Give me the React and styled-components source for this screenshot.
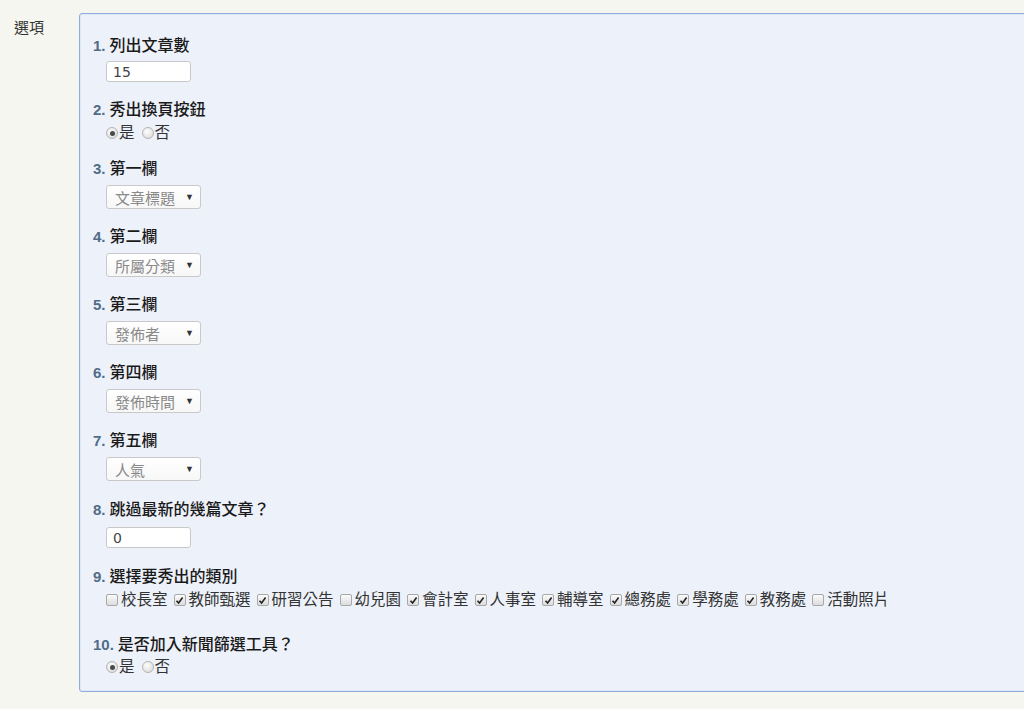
import React from "react";
import styled, { createGlobalStyle } from "styled-components";

const GlobalStyle = createGlobalStyle`
  html, body {
    margin: 0;
    padding: 0;
    background: #f6f6f1;
    overflow: hidden;
  }
  body {
    font-family: "Liberation Sans", "Noto Sans CJK TC", sans-serif;
    color: #222;
  }
`;

const cjk = `"Liberation Sans", "Noto Sans CJK TC", sans-serif`;

const Page = styled.div`
  display: flex;
  align-items: flex-start;
  padding-top: 13px;
  height: 709px;
  box-sizing: border-box;
  overflow: hidden;
`;

const FieldName = styled.div`
  width: 65px;
  flex: none;
  padding: 6px 0 0 14px;
  font-family: ${cjk};
  font-size: 15px;
  line-height: 17px;
  color: #333;
`;

const Panel = styled.div`
  flex: 1;
  margin-right: -20px;
  background: #edf1f9;
  border: 1px solid #8eaed8;
  border-radius: 3px;
  box-shadow: 0 0 0 1px #dde7f5 inset;
  padding: 22px 0 14px 13px;
  display: flex;
  flex-direction: column;
`;

const Item = styled.div`
  display: flex;
  flex-direction: column;
  align-items: flex-start;
  margin-bottom: ${(p) => p.$after ?? 18}px;
  &:last-child {
    margin-bottom: 0;
  }
`;

const Label = styled.div`
  font-family: ${cjk};
  font-size: 16px;
  line-height: 20px;
  font-weight: 500;
  color: #1a1a1a;
  white-space: nowrap;
`;

const Num = styled.span`
  color: #506c88;
  font-family: "Liberation Sans", Arial, sans-serif;
  font-weight: 700;
  font-size: 15px;
  margin-right: 4px;
`;

const Control = styled.div`
  margin-top: ${(p) => p.$top}px;
  margin-left: 13px;
  display: flex;
  align-items: center;
  flex-wrap: nowrap;
`;

const TextBox = styled.input`
  width: 85px;
  height: 21px;
  box-sizing: border-box;
  border: 1px solid #c9c9c9;
  border-radius: 3px;
  background: #fff;
  padding: 0 6px;
  font-family: "DejaVu Sans", Verdana, sans-serif;
  font-size: 14px;
  color: #444;
  outline: none;
`;

const SelectBox = styled.div`
  width: 95px;
  height: 24px;
  box-sizing: border-box;
  border: 1px solid #c9c9c9;
  border-radius: 3px;
  background: linear-gradient(#ffffff, #f7f7f7);
  display: flex;
  align-items: center;
  justify-content: space-between;
  padding: 0 6px 0 8px;
  font-family: ${cjk};
  font-size: 15px;
  color: #8a8a8a;
`;

const Arrow = styled.span`
  font-size: 9px;
  color: #333;
`;

const Choice = styled.label`
  display: inline-flex;
  align-items: center;
  font-family: ${cjk};
  font-size: 15.5px;
  line-height: 20px;
  color: #333;
  margin-right: ${(p) => p.$gap ?? 6}px;
  white-space: nowrap;
`;

const RadioDot = styled.span`
  width: 12px;
  height: 12px;
  box-sizing: border-box;
  border-radius: 50%;
  border: 1px solid #b4b4b4;
  background: radial-gradient(circle at 40% 35%, #fdfdfd, #d6d6d6);
  display: inline-flex;
  align-items: center;
  justify-content: center;
  margin-right: 1px;
  &::after {
    content: "";
    width: 5px;
    height: 5px;
    border-radius: 50%;
    background: ${(p) => (p.$on ? "#4a4a4a" : "transparent")};
  }
`;

const CheckBox = styled.span`
  width: 12px;
  height: 12px;
  box-sizing: border-box;
  border: 1px solid #a8a8a8;
  border-radius: 2px;
  background: linear-gradient(#fbfbfb, #dcdcdc);
  display: inline-flex;
  align-items: center;
  justify-content: center;
  margin-right: 3px;
  svg {
    display: block;
  }
`;

function Radio({ on, children, gap }) {
  return (
    <Choice $gap={gap}>
      <RadioDot $on={on} />
      {children}
    </Choice>
  );
}

function Check({ on, children }) {
  return (
    <Choice $gap={6}>
      <CheckBox>
        {on && (
          <svg width="9" height="9" viewBox="0 0 9 9">
            <path d="M1.5 4.8 L3.6 7 L7.6 1.6" fill="none" stroke="#222" strokeWidth="1.6" />
          </svg>
        )}
      </CheckBox>
      {children}
    </Choice>
  );
}

function Select({ value }) {
  return (
    <SelectBox>
      <span>{value}</span>
      <Arrow>▼</Arrow>
    </SelectBox>
  );
}

const columns = [
  ["3", "第一欄", "文章標題"],
  ["4", "第二欄", "所屬分類"],
  ["5", "第三欄", "發佈者"],
  ["6", "第四欄", "發佈時間"],
  ["7", "第五欄", "人氣"],
];

const categories = [
  ["校長室", false],
  ["教師甄選", true],
  ["研習公告", true],
  ["幼兒園", false],
  ["會計室", true],
  ["人事室", true],
  ["輔導室", true],
  ["總務處", true],
  ["學務處", true],
  ["教務處", true],
  ["活動照片", false],
];

export default function App() {
  return (
    <>
      <GlobalStyle />
      <Page>
        <FieldName>選項</FieldName>
        <Panel>
          <Item $after={18}>
            <Label>
              <Num>1.</Num>列出文章數
            </Label>
            <Control $top={5}>
              <TextBox defaultValue="15" />
            </Control>
          </Item>
          <Item $after={16}>
            <Label>
              <Num>2.</Num>秀出換頁按鈕
            </Label>
            <Control $top={3}>
              <Radio on gap={7}>是</Radio>
              <Radio>否</Radio>
            </Control>
          </Item>
          {columns.map(([n, title, value]) => (
            <Item key={n} $after={n === "7" ? 19 : 18}>
              <Label>
                <Num>{n}.</Num>
                {title}
              </Label>
              <Control $top={6}>
                <Select value={value} />
              </Control>
            </Item>
          ))}
          <Item $after={19}>
            <Label>
              <Num>8.</Num>跳過最新的幾篇文章？
            </Label>
            <Control $top={7}>
              <TextBox defaultValue="0" />
            </Control>
          </Item>
          <Item $after={25}>
            <Label>
              <Num>9.</Num>選擇要秀出的類別
            </Label>
            <Control $top={3}>
              {categories.map(([name, on]) => (
                <Check key={name} on={on}>
                  {name}
                </Check>
              ))}
            </Control>
          </Item>
          <Item>
            <Label>
              <Num>10.</Num>是否加入新聞篩選工具？
            </Label>
            <Control $top={2}>
              <Radio on gap={7}>是</Radio>
              <Radio>否</Radio>
            </Control>
          </Item>
        </Panel>
      </Page>
    </>
  );
}
